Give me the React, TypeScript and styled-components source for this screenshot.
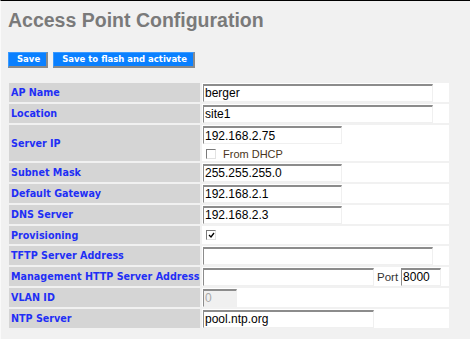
import React from "react";
import styled, { createGlobalStyle } from "styled-components";

const Global = createGlobalStyle`
  html { background: #f1f1f1; }
  html, body { margin: 0; padding: 0; }
  body {
    background: #f1f1f1;
    border-top: 1px solid #000;
    border-left: 1px solid #fafafa;
    min-height: 338px;
  }
`;

const Page = styled.div`
  padding: 0 0 0 7px;
`;

const Title = styled.h1`
  margin: 7px 0 0;
  font: bold 19.5px/24px "Liberation Sans", Arial, sans-serif;
  color: #7a7a7a;
`;

const ButtonBar = styled.div`
  display: flex;
  gap: 5px;
  margin-top: 20px;
`;

const Button = styled.button`
  height: 16px;
  box-sizing: border-box;
  padding: 0 6px 0 8px;
  background: #0a80ff;
  color: #fff;
  font: bold 8.5px/13px "DejaVu Sans", Verdana, sans-serif;
  border-style: solid;
  border-width: 1px 2px 2px 1px;
  border-color: #3a9aff #8a8a8a #8a8a8a #3a9aff;
  cursor: pointer;
`;

const Table = styled.table`
  border-spacing: 2px;
  margin: 13px 0 0 -1px;
  width: 444px;
  table-layout: fixed;
`;

const Row = styled.tr<{ $h: number }>`
  height: ${(p) => p.$h}px;
`;

const LabelCell = styled.td`
  width: 191px;
  box-sizing: border-box;
  background: #d5d5d5;
  padding: 0 0 0 2px;
  color: #1f2ff5;
  font: bold 9.6px "DejaVu Sans", Verdana, sans-serif;
  vertical-align: middle;
  white-space: nowrap;
`;

const ValueCell = styled.td`
  background: #fff;
  padding: 0 0 0 1px;
  vertical-align: middle;
`;

const TextInput = styled.input<{ $w: number }>`
  display: block;
  width: ${(p) => p.$w}px;
  height: 18px;
  box-sizing: border-box;
  margin: 0;
  padding: 0 1px;
  border-style: solid;
  border-width: 2px 1px 1px 1px;
  border-color: #8c8c8c #f0f0f0 #f0f0f0 #8c8c8c;
  background: #fff;
  color: #000;
  font: 12px "Liberation Sans", Arial, sans-serif;
  outline: none;
  &:disabled {
    background: #f0f0f0;
    color: #a8a8a8;
  }
`;

const InlineRow = styled.div`
  display: flex;
  align-items: center;
`;

const CheckLine = styled.div`
  display: flex;
  align-items: center;
  gap: 7px;
  margin: 4px 0 0 3px;
`;

const CheckBox = styled.span`
  display: inline-flex;
  align-items: center;
  justify-content: center;
  width: 10px;
  height: 10px;
  box-sizing: border-box;
  border-style: solid;
  border-width: 1px;
  border-color: #7a7a7a #e2e2e2 #e2e2e2 #7a7a7a;
  background: #fff;
`;

const CheckNote = styled.span`
  font: 11px "Liberation Sans", Arial, sans-serif;
  color: #4a3520;
`;

const PortLabel = styled.span`
  font: 11.5px "Liberation Sans", Arial, sans-serif;
  color: #333;
  margin: 0 3px;
`;

const ProvCell = styled.div`
  padding-left: 3px;
  display: flex;
  align-items: center;
`;

const Tick = () => (
  <svg width="7" height="6" viewBox="0 0 7 6">
    <path d="M1 3 L3 5 L6 1" stroke="#000" strokeWidth="1.3" fill="none" />
  </svg>
);

type Field = {
  label: string;
  value: string;
  w: number;
};

const Plain = ({ label, value, w }: Field) => (
  <Row $h={19}>
    <LabelCell>{label}</LabelCell>
    <ValueCell>
      <TextInput $w={w} defaultValue={value} />
    </ValueCell>
  </Row>
);

export default function App() {
  return (
    <>
      <Global />
      <Page>
        <Title>Access Point Configuration</Title>
        <ButtonBar>
          <Button>Save</Button>
          <Button>Save to flash and activate</Button>
        </ButtonBar>
        <Table>
          <tbody>
            <Plain label="AP Name" value="berger" w={230} />
            <Plain label="Location" value="site1" w={230} />
            <Row $h={36}>
              <LabelCell>Server IP</LabelCell>
              <ValueCell>
                <TextInput $w={139} defaultValue="192.168.2.75" />
                <CheckLine>
                  <CheckBox />
                  <CheckNote>From DHCP</CheckNote>
                </CheckLine>
              </ValueCell>
            </Row>
            <Plain label="Subnet Mask" value="255.255.255.0" w={139} />
            <Plain label="Default Gateway" value="192.168.2.1" w={139} />
            <Plain label="DNS Server" value="192.168.2.3" w={139} />
            <Row $h={18}>
              <LabelCell>Provisioning</LabelCell>
              <ValueCell>
                <ProvCell>
                  <CheckBox>
                    <Tick />
                  </CheckBox>
                </ProvCell>
              </ValueCell>
            </Row>
            <Plain label="TFTP Server Address" value="" w={230} />
            <Row $h={19}>
              <LabelCell>Management HTTP Server Address</LabelCell>
              <ValueCell>
                <InlineRow>
                  <TextInput $w={171} defaultValue="" />
                  <PortLabel>Port</PortLabel>
                  <TextInput $w={40} defaultValue="8000" />
                </InlineRow>
              </ValueCell>
            </Row>
            <Row $h={19}>
              <LabelCell>VLAN ID</LabelCell>
              <ValueCell>
                <TextInput $w={34} defaultValue="0" disabled />
              </ValueCell>
            </Row>
            <Plain label="NTP Server" value="pool.ntp.org" w={171} />
          </tbody>
        </Table>
      </Page>
    </>
  );
}
